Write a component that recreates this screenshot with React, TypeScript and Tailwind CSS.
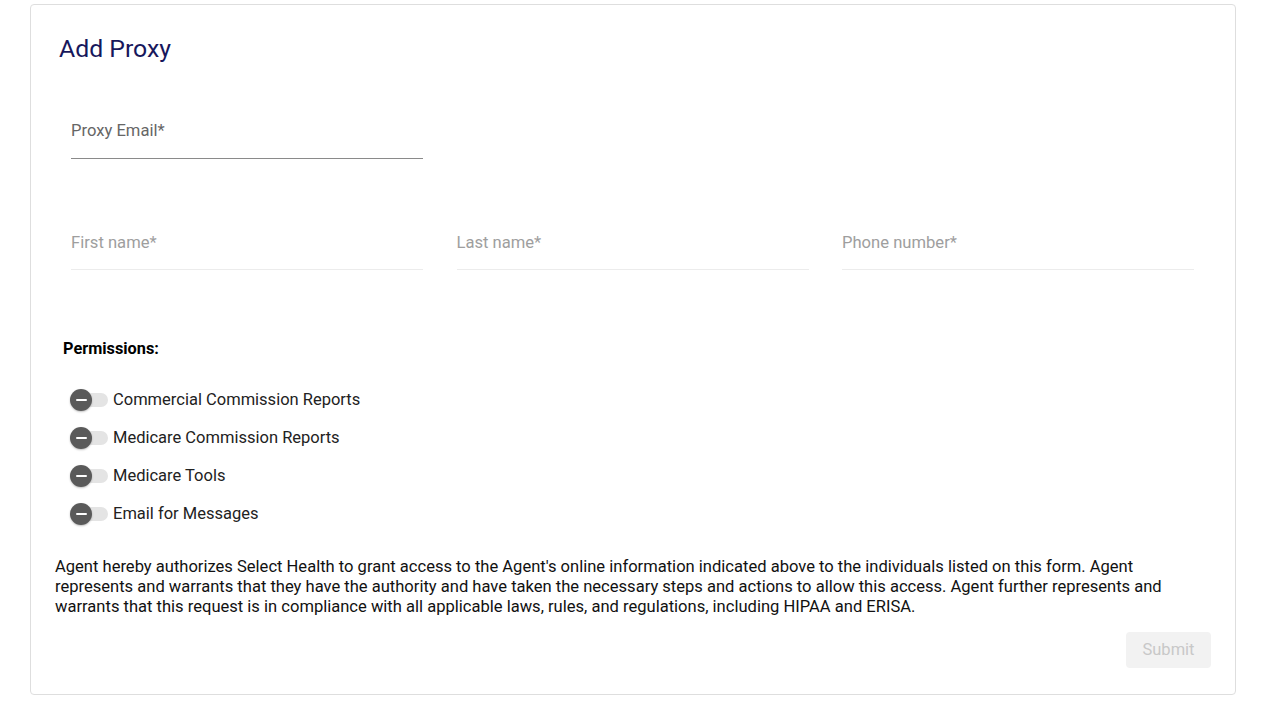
import React from "react";

const PERMISSIONS = [
  "Commercial Commission Reports",
  "Medicare Commission Reports",
  "Medicare Tools",
  "Email for Messages",
];

function Toggle({ label }: { label: string }) {
  return (
    <label className="flex h-[38px] items-center">
      <span className="relative flex h-[22px] w-[38px] items-center">
        <span className="absolute left-[8px] right-0 h-[14px] rounded-full bg-[#e4e4e4]" />
        <span className="relative flex h-[22px] w-[22px] items-center justify-center rounded-full bg-[#5a5a5a] shadow-[0_1px_2px_rgba(0,0,0,0.25)]">
          <span className="h-[2px] w-[11px] rounded-full bg-white" />
        </span>
      </span>
      <span className="ml-[5px] text-[16.5px] text-[#222]">{label}</span>
    </label>
  );
}

function Field({ label, active }: { label: string; active?: boolean }) {
  return (
    <div
      className={
        active
          ? "w-[352px] border-b border-[#8a8a8a] pb-[15px]"
          : "w-[352px] border-b border-[#ececec] pb-[14px]"
      }
    >
      <span
        className={
          active
            ? "block text-[16.6px] leading-[24px] text-[#666]"
            : "block text-[16.6px] leading-[24px] text-[#9e9e9e]"
        }
      >
        {label}
      </span>
    </div>
  );
}

export default function App() {
  return (
    <main className="min-h-screen bg-white pl-[30px] pt-[4px] font-['Roboto',sans-serif]">
      <div className="flex h-[691px] w-[1206px] flex-col rounded-[4px] border border-[#dedede] px-[24px] pt-[28px]">
        <h1 className="ml-[4px] text-[24.8px] leading-[32px] text-[#17175c]">Add Proxy</h1>

        <div className="mt-[54px] pl-[16px]">
          <Field label="Proxy Email*" active />
          <div className="mt-[72px] flex gap-[33.5px]">
            <Field label="First name*" />
            <Field label="Last name*" />
            <Field label="Phone number*" />
          </div>
        </div>

        <p className="ml-[8px] mt-[67px] text-[16.3px] font-bold leading-[24px] text-black">
          Permissions:
        </p>

        <div className="ml-[15px] mt-[20px] flex flex-col">
          {PERMISSIONS.map((p) => (
            <Toggle key={p} label={p} />
          ))}
        </div>

        <p className="mt-[24px] text-[16.56px] leading-[20px] text-[#111]">
          Agent hereby authorizes Select Health to grant access to the Agent's online information
          indicated above to the individuals listed on this form. Agent represents and warrants that
          they have the authority and have taken the necessary steps and actions to allow this
          access. Agent further represents and warrants that this request is in compliance with all
          applicable laws, rules, and regulations, including HIPAA and ERISA.
        </p>

        <button
          disabled
          className="mt-[15px] h-[36px] w-[85px] self-end rounded-[4px] bg-[#f2f2f2] text-[16.5px] text-[#c8c8c8]"
        >
          Submit
        </button>
      </div>
    </main>
  );
}
